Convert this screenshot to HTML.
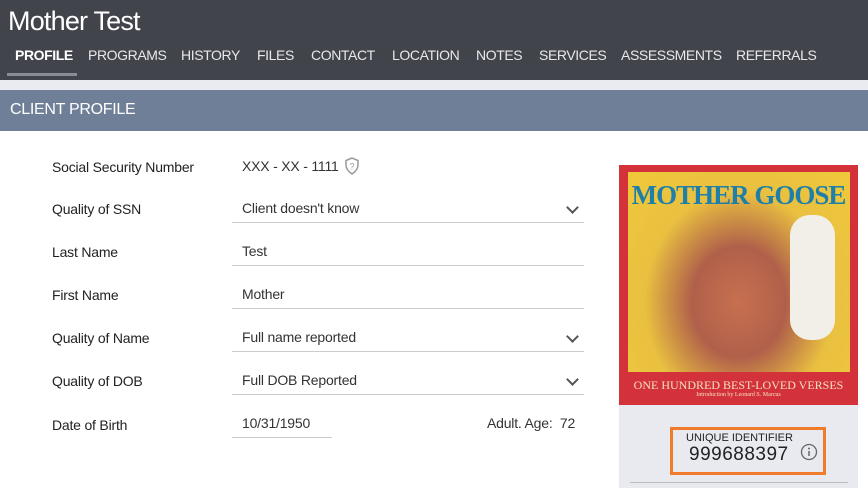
<!DOCTYPE html>
<html><head><style>
body{margin:0;width:868px;height:488px;overflow:hidden;font-family:"Liberation Sans",sans-serif;background:#fff;position:relative}
.hdr{position:absolute;left:0;top:0;width:868px;height:80px;background:#42444c}
.title{position:absolute;left:8px;top:6px;font-size:27px;color:#fff;letter-spacing:-0.8px}
.tab{position:absolute;top:47px;font-size:14px;color:#e8e8ec;letter-spacing:-0.4px;white-space:nowrap}
.strip{position:absolute;left:0;top:80px;width:868px;height:10px;background:#e9ebf0}
.sec{position:absolute;left:0;top:90px;width:868px;height:41px;background:#6f7f97;color:#fff;font-size:16px;line-height:40px;text-indent:10px;letter-spacing:-0.3px}
.lbl{position:absolute;left:52px;font-size:14px;color:#222;letter-spacing:-0.2px}
.val{position:absolute;left:242px;font-size:14px;color:#333;letter-spacing:-0.2px}
.ul{position:absolute;left:232px;width:352px;height:1px;background:#ccc}
.chev{position:absolute;left:568px;width:7px;height:7px;border-right:2px solid #555;border-bottom:2px solid #555;transform:rotate(45deg)}
</style></head><body>
<div class="hdr"></div>
<div class="title">Mother Test</div>
<div class="tab" style="left:15px;font-weight:bold;color:#fff">PROFILE</div>
<div style="position:absolute;left:7px;top:73px;width:70px;height:3px;background:#8a8c94"></div>
<div class="tab" style="left:88px">PROGRAMS</div>
<div class="tab" style="left:181px">HISTORY</div>
<div class="tab" style="left:257px">FILES</div>
<div class="tab" style="left:311px">CONTACT</div>
<div class="tab" style="left:392px">LOCATION</div>
<div class="tab" style="left:476px">NOTES</div>
<div class="tab" style="left:539px">SERVICES</div>
<div class="tab" style="left:621px">ASSESSMENTS</div>
<div class="tab" style="left:736px">REFERRALS</div>
<div class="strip"></div>
<div class="sec">CLIENT PROFILE</div>

<div class="lbl" style="top:159px">Social Security Number</div>
<div class="val" style="top:158px">XXX - XX - 1111</div>
<svg style="position:absolute;left:344px;top:157px" width="16" height="18" viewBox="0 0 16 18"><path d="M8 1L2 3.5V8c0 4 3 7 6 9c3-2 6-5 6-9V3.5z" fill="none" stroke="#999" stroke-width="1.5"/><text x="8" y="12.5" font-size="9" text-anchor="middle" fill="#999" font-family="Liberation Sans">?</text></svg>

<div class="lbl" style="top:201px">Quality of SSN</div>
<div class="val" style="top:200px">Client doesn't know</div>
<div class="chev" style="top:203px"></div><div class="ul" style="top:222px"></div>

<div class="lbl" style="top:244px">Last Name</div>
<div class="val" style="top:243px">Test</div><div class="ul" style="top:265px"></div>

<div class="lbl" style="top:287px">First Name</div>
<div class="val" style="top:286px">Mother</div><div class="ul" style="top:308px"></div>

<div class="lbl" style="top:330px">Quality of Name</div>
<div class="val" style="top:329px">Full name reported</div>
<div class="chev" style="top:332px"></div><div class="ul" style="top:351px"></div>

<div class="lbl" style="top:373px">Quality of DOB</div>
<div class="val" style="top:372px">Full DOB Reported</div>
<div class="chev" style="top:375px"></div><div class="ul" style="top:394px"></div>

<div class="lbl" style="top:417px">Date of Birth</div>
<div class="val" style="top:415px">10/31/1950</div><div class="ul" style="top:437px;width:100px"></div>
<div class="val" style="left:487px;top:415px">Adult. Age:&nbsp; 72</div>

<div style="position:absolute;left:619px;top:165px;width:239px;height:240px;background:#d4323a"></div>
<div style="position:absolute;left:628px;top:172px;width:222px;height:200px;background:radial-gradient(ellipse at 50% 65%,#c87050 0%,#b0604a 30%,#e9c040 60%,#f0c93a 100%)"></div>
<div style="position:absolute;left:790px;top:215px;width:45px;height:125px;background:#f2efe8;border-radius:20px"></div>
<div style="position:absolute;left:619px;top:180px;width:239px;text-align:center;font-family:'Liberation Serif',serif;font-weight:bold;font-size:27px;color:#1e7fa8;letter-spacing:-1px;white-space:nowrap">MOTHER GOOSE</div>
<div style="position:absolute;left:619px;top:378px;width:239px;text-align:center;font-family:'Liberation Serif',serif;font-size:12px;color:#f4e0c0;white-space:nowrap">ONE HUNDRED BEST-LOVED VERSES</div>
<div style="position:absolute;left:619px;top:392px;width:239px;text-align:center;font-family:'Liberation Serif',serif;font-size:6px;color:#f4e0c0">Introduction by Leonard S. Marcus</div>

<div style="position:absolute;left:619px;top:405px;width:239px;height:83px;background:#e8eaef"></div>
<div style="position:absolute;left:670px;top:427px;width:150px;height:42px;border:3px solid #f07b2a"></div>
<div style="position:absolute;left:686px;top:432px;font-size:11px;color:#222">UNIQUE IDENTIFIER</div>
<div style="position:absolute;left:689px;top:444px;font-size:19px;color:#222;letter-spacing:0.5px">999688397</div>
<svg style="position:absolute;left:800px;top:443px" width="18" height="18" viewBox="0 0 18 18"><circle cx="9" cy="9" r="7.5" fill="none" stroke="#666" stroke-width="1.3"/><circle cx="9" cy="5.5" r="1" fill="#666"/><path d="M9 8v5" stroke="#666" stroke-width="1.5"/></svg>
<div style="position:absolute;left:630px;top:482px;width:218px;height:1px;background:#bbb"></div>
</body></html>
